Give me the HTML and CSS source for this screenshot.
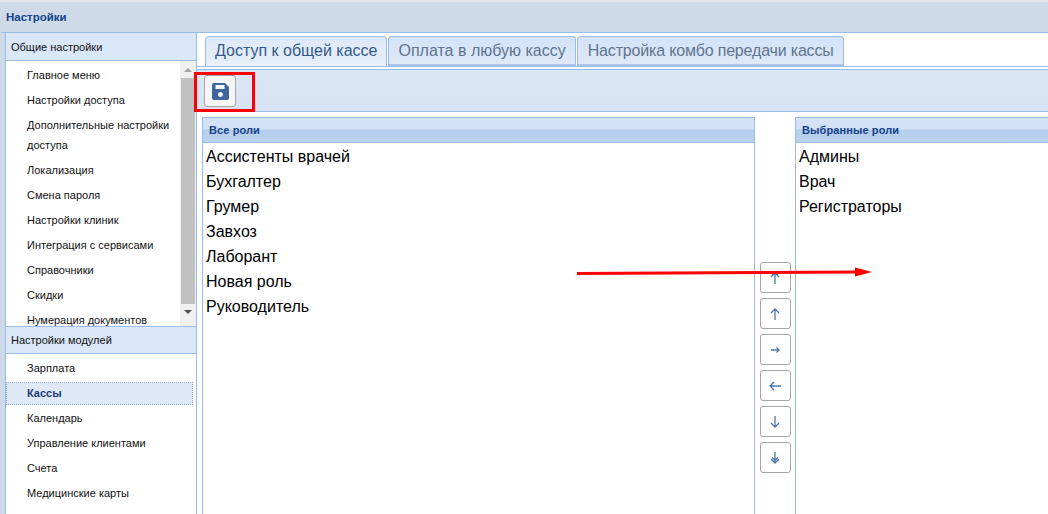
FILE: index.html
```html
<!DOCTYPE html>
<html lang="ru">
<head>
<meta charset="utf-8">
<title>Настройки</title>
<link rel="stylesheet" href="styles.css">
</head>
<body>
<div class="window">
  <header class="title">Настройки</header>
  <div class="body">
    <aside class="side">
      <div class="acc-head">Общие настройки</div>
      <div class="acc-list top-list">
        <div class="items">
          <div class="item">Главное меню</div>
          <div class="item">Настройки доступа</div>
          <div class="item">Дополнительные настройки доступа</div>
          <div class="item">Локализация</div>
          <div class="item">Смена пароля</div>
          <div class="item">Настройки клиник</div>
          <div class="item">Интеграция с сервисами</div>
          <div class="item">Справочники</div>
          <div class="item">Скидки</div>
          <div class="item">Нумерация документов</div>
        </div>
        <div class="scrollbar">
          <span class="arrow-up"></span>
          <span class="thumb"></span>
          <span class="arrow-down"></span>
        </div>
      </div>
      <div class="acc-head second">Настройки модулей</div>
      <div class="acc-list">
        <div class="items">
          <div class="item">Зарплата</div>
          <div class="item active">Кассы</div>
          <div class="item">Календарь</div>
          <div class="item">Управление клиентами</div>
          <div class="item">Счета</div>
          <div class="item">Медицинские карты</div>
        </div>
      </div>
    </aside>
    <main class="main">
      <nav class="tabs">
        <div class="tab current">Доступ к общей кассе</div>
        <div class="tab">Оплата в любую кассу</div>
        <div class="tab">Настройка комбо передачи кассы</div>
      </nav>
      <div class="toolbar">
        <button class="btn save" aria-label="Сохранить">
          <svg width="17" height="17" viewBox="0 0 17 17"><path class="ico" fill-rule="evenodd" d="M2 0h11l4 4v11a2 2 0 0 1-2 2H2a2 2 0 0 1-2-2V2a2 2 0 0 1 2-2zM3.500 2v4h9V2zM8.500 9a2.500 2.500 0 1 0 0 5 2.500 2.500 0 0 0 0-5z"/></svg>
        </button>
      </div>
      <div class="content">
        <section class="panel left">
          <h2 class="panel-head">Все роли</h2>
          <div class="roles">
            <div>Ассистенты врачей</div>
            <div>Бухгалтер</div>
            <div>Грумер</div>
            <div>Завхоз</div>
            <div>Лаборант</div>
            <div>Новая роль</div>
            <div>Руководитель</div>
          </div>
        </section>
        <div class="mover">
          <button class="btn move"><svg width="14" height="14" viewBox="0 0 14 14"><path class="line" d="M7 13V3M3 6l4-4 4 4M4 4.500l3-3 3 3"/></svg></button>
          <button class="btn move"><svg width="14" height="14" viewBox="0 0 14 14"><path class="line" d="M7 13V2M3 6l4-4 4 4"/></svg></button>
          <button class="btn move"><svg width="14" height="14" viewBox="0 0 14 14"><path class="line" d="M3 7h8M8.500 4.500L11 7l-2.500 2.500"/></svg></button>
          <button class="btn move"><svg width="14" height="14" viewBox="0 0 14 14"><path class="line" d="M13 7H2M6 3L2 7l4 4"/></svg></button>
          <button class="btn move"><svg width="14" height="14" viewBox="0 0 14 14"><path class="line" d="M7 1v11M3 8l4 4 4-4"/></svg></button>
          <button class="btn move"><svg width="14" height="14" viewBox="0 0 14 14"><path class="line" d="M7 1v11M3 8l4 4 4-4M4 6.500l3 3 3-3"/></svg></button>
        </div>
        <section class="panel right">
          <h2 class="panel-head">Выбранные роли</h2>
          <div class="roles">
            <div>Админы</div>
            <div>Врач</div>
            <div>Регистраторы</div>
          </div>
        </section>
      </div>
    </main>
  </div>
  <div class="red-box"></div>
  <svg class="red-arrow" width="300" height="14" viewBox="0 0 300 14"><path d="M1 8.500L282 7" fill="none" stroke="#f00" stroke-width="3"/><path d="M279 2.500L296 7 279 11.500Z" fill="#f00"/></svg>
</div>
</body>
</html>
```
FILE: styles.css
```css
* { box-sizing: border-box; }
html, body { margin: 0; height: 100%; overflow: hidden; }
body { background: #fff; font-family: "Liberation Sans", sans-serif; }
.window {
  position: relative;
  width: 1048px;
  height: 514px;
  background: #cedae7;
  border-top: 2px solid #e6e6ea;
  padding-left: 5px;
  overflow: hidden;
  display: flex;
  flex-direction: column;
}
.title {
  height: 31px;
  flex: none;
  margin-left: -4px;
  padding-left: 5px;
  font: bold 11.500px/31px "Liberation Sans", sans-serif;
  color: #15428b;
  border-bottom: 1px solid #99bce8;
}
.body { flex: 1; display: flex; min-height: 0; }
.side {
  width: 192px;
  flex: none;
  display: flex;
  flex-direction: column;
  background: #fff;
  border-left: 1px solid #99bce8;
  border-right: 1px solid #99bce8;
}
.acc-head {
  height: 28px;
  flex: none;
  padding-left: 5px;
  background: #d9e7f8;
  border-bottom: 1px solid #99bce8;
  font: 11px/28px "Liberation Sans", sans-serif;
  color: #111;
}
.acc-head.second { border-top: 1px solid #99bce8; line-height: 26px; }
.acc-list { display: flex; padding-top: 1.500px; min-height: 0; }
.top-list { height: 265px; flex: none; overflow: hidden; }
.items { flex: 1; min-width: 0; }
.item {
  padding: 2.500px 6px 2.500px 21px;
  font: 11px/20px "Liberation Sans", sans-serif;
  color: #111;
}
.item.active {
  margin: 1px 3px 1px 0;
  padding: 0.500px 11px 0.500px 20px;
  background: #dfe8f6;
  border: 1px dotted #8fb0dc;
  font-weight: bold;
  color: #23397a;
}
.scrollbar {
  width: 16px;
  flex: none;
  margin-top: -1.500px;
  background: #f0f0f0;
  display: flex;
  flex-direction: column;
  align-items: center;
}
.thumb { flex: none; width: 14px; height: 226px; background: #c1c1c1; }
.arrow-up, .arrow-down { flex: none; width: 0; height: 0; border-left: 4px solid transparent; border-right: 4px solid transparent; }
.arrow-up { border-bottom: 4px solid #a3a3a3; margin: 7px 0 6px; }
.arrow-down { border-top: 4px solid #505050; margin: 6px 0 0; }
.main { flex: 1; min-width: 0; display: flex; flex-direction: column; background: #fff; }
.tabs {
  height: 34px;
  flex: none;
  display: flex;
  gap: 1px;
  padding: 3px 0 0 8px;
  border-bottom: 1px solid #99bce8;
}
.tab {
  height: 30px;
  padding: 0 9px;
  background: linear-gradient(#d3e3f8, #dfe9f6);
  border: 1px solid #99bce8;
  border-bottom: 2px solid #a9c5ea;
  border-radius: 4px 4px 0 0;
  font: 16px/28px "Liberation Sans", sans-serif;
  color: #5f7590;
  white-space: nowrap;
}
.tab:last-child { letter-spacing: -0.170px; padding-left: 10px; }
.tab.current { color: #34598c; background: linear-gradient(#dde9f9, #e8eff9); border-bottom: none; }
.toolbar {
  height: 43px;
  flex: none;
  margin-top: 2px;
  padding: 5px 0 0 7px;
  background: linear-gradient(#dbe6f5, #d7e3f3);
  border-top: 1px solid #99bce8;
  border-bottom: 1px solid #99bce8;
}
.btn {
  display: flex;
  align-items: center;
  justify-content: center;
  padding: 0;
  background: #fff;
  border: 1px solid #a6a6a6;
  border-radius: 3px;
}
.save { width: 32px; height: 32px; background: #f6f6f6; }
.ico { fill: #3e669c; }
.line { fill: none; stroke: #4e78ad; stroke-width: 1.300; }
.content { flex: 1; min-height: 0; display: flex; padding: 5px 0 0 5px; }
.panel { display: flex; flex-direction: column; min-width: 0; }
.panel.left { width: 553px; flex: none; }
.panel.right { flex: 1; }
.panel-head {
  height: 26px;
  flex: none;
  margin: 0;
  padding-left: 6px;
  background: linear-gradient(#d3e2f6 0 45%, #b3cdec 50%, #bcd3ef);
  border: 1px solid #99bce8;
  font: bold 11px/24px "Liberation Sans", sans-serif;
  letter-spacing: 0.100px;
  color: #15428b;
}
.right .panel-head { border-right: none; }
.roles {
  flex: 1;
  padding-top: 1px;
  border-left: 1px solid #99bce8;
  border-right: 1px solid #99bce8;
  font: 16px/25px "Liberation Sans", sans-serif;
  color: #000;
}
.roles > div { padding-left: 3px; }
.right .roles { border-right: none; }
.mover {
  width: 40px;
  flex: none;
  display: flex;
  flex-direction: column;
  align-items: center;
  gap: 5px;
  padding-top: 145px;
}
.move { width: 31px; height: 31px; }
.red-box {
  position: absolute;
  left: 194px;
  top: 70px;
  width: 61px;
  height: 40px;
  border: 3px solid #f00;
}
.red-arrow { position: absolute; left: 576px; top: 263px; }
```
